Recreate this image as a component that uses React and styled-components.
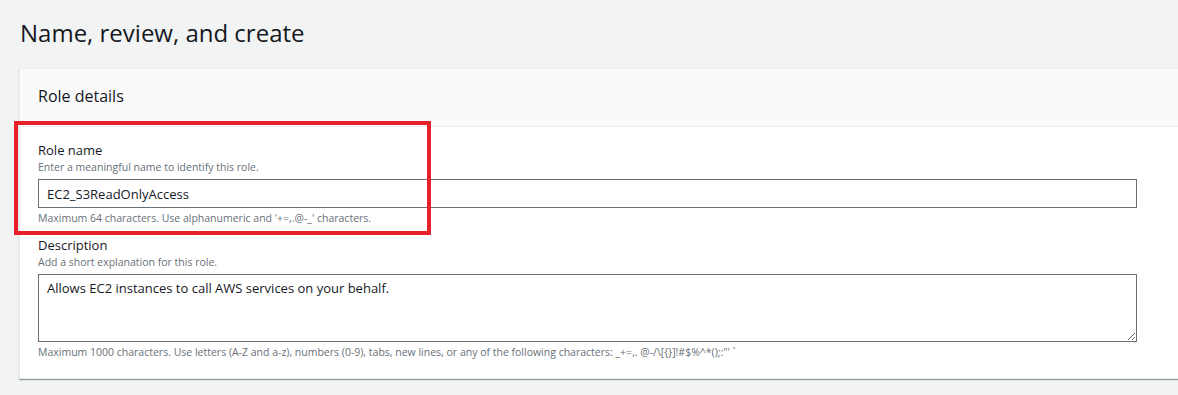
import styled, { createGlobalStyle } from "styled-components"

const GlobalStyle = createGlobalStyle`
  html, body {
    margin: 0;
    padding: 0;
    background: #f2f3f3;
    overflow: hidden;
  }
  body {
    font-family: "Open Sans", "Liberation Sans", sans-serif;
    color: #16191f;
  }
`

export default function App() {
  return (
    <>
      <GlobalStyle />
      <Page>
        <Heading>Name, review, and create</Heading>

        <Card>
          <CardHeader>
            <CardTitle>Role details</CardTitle>
          </CardHeader>

          <CardBody>
            <Field>
              <Label>Role name</Label>
              <Hint>Enter a meaningful name to identify this role.</Hint>
              <Input defaultValue="EC2_S3ReadOnlyAccess" />
              <Constraint>
                Maximum 64 characters. Use alphanumeric and '+=,.@-_' characters.
              </Constraint>
            </Field>

            <Field>
              <Label>Description</Label>
              <Hint>Add a short explanation for this role.</Hint>
              <TextArea defaultValue="Allows EC2 instances to call AWS services on your behalf." />
              <Constraint>
                Maximum 1000 characters. Use letters (A-Z and a-z), numbers (0-9), tabs, new lines, or any of the following characters: _+=,. @-/\[{"{}"}]!#$%^*();:"' `
              </Constraint>
            </Field>
          </CardBody>
        </Card>

        <Highlight />
      </Page>
    </>
  )
}

const Page = styled.div`
  position: relative;
  padding: 13px 0 0 19px;
  height: 395px;
  box-sizing: border-box;
`

const Heading = styled.h1`
  margin: 0 0 0 1px;
  font-size: 24px;
  font-weight: 400;
  line-height: 40px;
  color: #16191f;
`

const Card = styled.section`
  margin-top: 15px;
  width: 1200px;
  background: #ffffff;
  border: 1px solid #eaeded;
  border-right: none;
  box-shadow: 0 1px 1px 0 rgba(0, 28, 36, 0.3), 1px 1px 1px 0 rgba(0, 28, 36, 0.15);
`

const CardHeader = styled.div`
  height: 58px;
  padding: 0 18px 3px;
  box-sizing: border-box;
  display: flex;
  align-items: center;
  background: #fafafa;
  border-bottom: 1px solid #eaeded;
`

const CardTitle = styled.h2`
  margin: 0;
  font-size: 16px;
  font-weight: 400;
  color: #16191f;
`

const CardBody = styled.div`
  padding: 14px 18px 18px;
  display: flex;
  flex-direction: column;
  gap: 10px;
`

const Field = styled.div`
  display: flex;
  flex-direction: column;
`

const Label = styled.label`
  font-size: 13px;
  line-height: 18px;
  color: #16191f;
`

const Hint = styled.div`
  font-size: 10.5px;
  line-height: 16px;
  color: #687078;
  margin-bottom: 4px;
`

const Input = styled.input`
  width: 1099px;
  height: 29px;
  box-sizing: border-box;
  padding: 0 8px;
  border: 1px solid #687078;
  border-radius: 0;
  font-family: inherit;
  font-size: 13px;
  color: #16191f;
  outline: none;
`

const TextArea = styled.textarea`
  width: 1099px;
  height: 68px;
  box-sizing: border-box;
  padding: 4px 8px;
  border: 1px solid #687078;
  border-radius: 0;
  font-family: inherit;
  font-size: 13px;
  line-height: 18px;
  color: #16191f;
  resize: vertical;
  outline: none;
`

const Constraint = styled.div`
  margin-top: 2px;
  font-size: 10.5px;
  line-height: 16px;
  color: #687078;
`

const Highlight = styled.div`
  position: absolute;
  left: 14px;
  top: 121px;
  width: 417px;
  height: 114px;
  box-sizing: border-box;
  border: 4px solid #e8202a;
  pointer-events: none;
`
